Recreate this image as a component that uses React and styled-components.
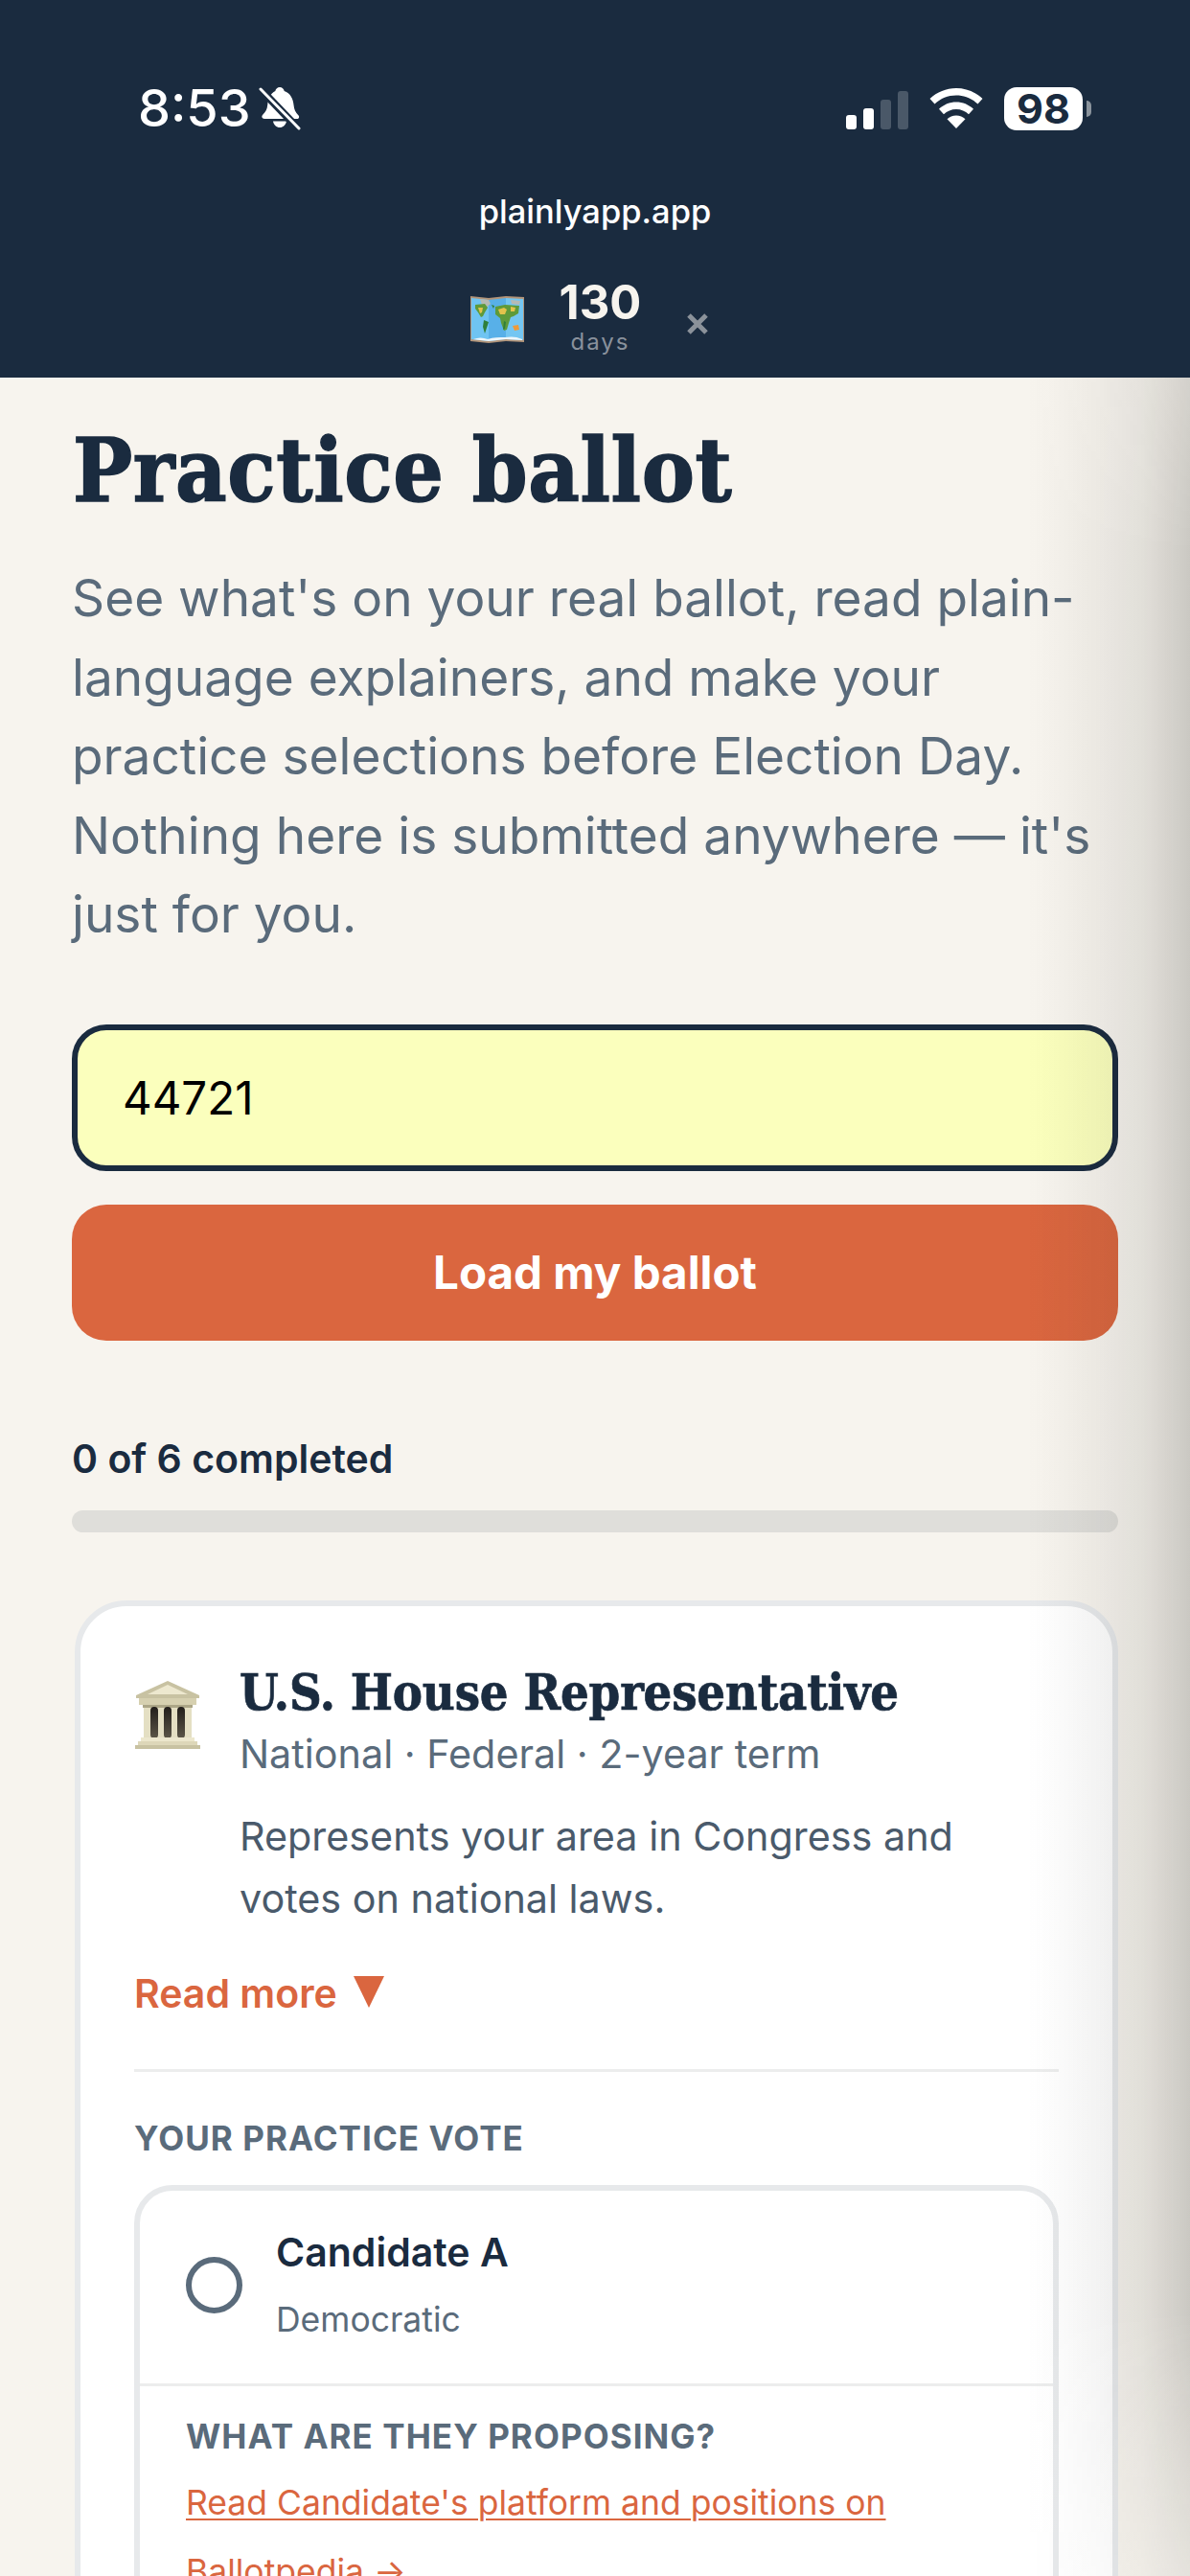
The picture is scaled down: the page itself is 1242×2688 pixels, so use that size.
import React from 'react';
import styled, { createGlobalStyle } from 'styled-components';

const GlobalStyle = createGlobalStyle`
  html, body {
    margin: 0;
    padding: 0;
    background: #f7f4ee;
  }
  body {
    width: 1242px;
    height: 2688px;
    overflow: hidden;
    font-family: Inter, "Liberation Sans", sans-serif;
  }
`;

const navy = '#1a2b3f';
const slate = '#5a6b7b';
const rust = '#da663f';

const Screen = styled.div`
  position: relative;
  width: 1242px;
  height: 2688px;
  overflow: hidden;
  background: #f7f4ee;
`;

const TopBar = styled.header`
  height: 394px;
  box-sizing: border-box;
  background: ${navy};
  padding-top: 88px;
`;

const StatusRow = styled.div`
  display: flex;
  justify-content: space-between;
  align-items: center;
  height: 50px;
  padding: 0 112px 0 144px;
`;

const StatusGroup = styled.div`
  display: flex;
  align-items: center;
  gap: ${p => p.$gap}px;
`;

const Clock = styled.span`
  font-size: 54px;
  font-weight: 500;
  line-height: 50px;
  color: #fff;
`;

const SignalBars = styled.div`
  display: flex;
  align-items: flex-end;
  gap: 7px;
  height: 40px;
  margin-top: 4px;
`;

const SignalBar = styled.i`
  display: block;
  width: 11px;
  height: ${p => p.$h}px;
  border-radius: 3px;
  background: ${p => (p.$on ? '#fff' : '#4a5868')};
`;

const Battery = styled.div`
  position: relative;
  width: 82px;
  height: 45px;
  border-radius: 13px;
  background: #fff;
  color: ${navy};
  font-size: 43px;
  font-weight: 700;
  line-height: 45px;
  text-align: center;
  &::after {
    content: '';
    position: absolute;
    left: 86px;
    top: 14px;
    width: 5px;
    height: 17px;
    border-radius: 0 5px 5px 0;
    background: #8a939c;
  }
`;

const SiteName = styled.div`
  margin-top: 61px;
  text-align: center;
  font-size: 34.5px;
  font-weight: 500;
  line-height: 44px;
  color: #fff;
`;

const Countdown = styled.div`
  display: flex;
  justify-content: center;
  align-items: center;
  height: 81px;
  margin-top: 46px;
  padding-right: 12px;
`;

const MapSlot = styled.div`
  margin-top: 7px;
  line-height: 0;
`;

const DaysBlock = styled.div`
  display: flex;
  flex-direction: column;
  align-items: center;
  margin: 2px 48px 0 37px;
`;

const DaysNumber = styled.span`
  font-size: 49px;
  font-weight: 700;
  line-height: 50px;
  color: #f7f4ee;
`;

const DaysLabel = styled.span`
  margin-top: 3px;
  font-size: 24px;
  line-height: 26px;
  letter-spacing: 2px;
  color: #89919c;
`;

const Dismiss = styled.svg`
  display: block;
  width: 22px;
  height: 22px;
  margin-top: 17px;
`;

const Content = styled.main`
  padding: 47px 75px 0;
`;

const Title = styled.h1`
  margin: 0;
  padding-left: 1px;
  font-family: "DejaVu Serif Condensed", "Liberation Serif", serif;
  font-stretch: condensed;
  font-size: 92px;
  font-weight: 700;
  line-height: 100px;
  letter-spacing: 0.6px;
  color: ${navy};
  -webkit-text-stroke: 1.5px ${navy};
`;

const Lead = styled.p`
  margin: 42px 0 0;
  font-size: 53.2px;
  line-height: 82.5px;
  color: ${slate};
`;

const ZipInput = styled.div`
  box-sizing: border-box;
  height: 153px;
  margin-top: 73px;
  padding-left: 47px;
  border: 6px solid ${navy};
  border-radius: 36px;
  background: #fbffbd;
  font-size: 47.5px;
  line-height: 141px;
  color: #000;
`;

const LoadButton = styled.button`
  display: block;
  width: 100%;
  height: 142px;
  margin-top: 35px;
  padding: 0;
  border: 0;
  border-radius: 36px;
  background: ${rust};
  font-family: inherit;
  font-size: 47.5px;
  font-weight: 700;
  color: #fff;
`;

const ProgressLabel = styled.div`
  margin-top: 93px;
  font-size: 41px;
  font-weight: 600;
  line-height: 60px;
  color: ${navy};
`;

const ProgressTrack = styled.div`
  height: 23px;
  margin-top: 24px;
  border-radius: 12px;
  background: #dfdeda;
`;

const Card = styled.section`
  box-sizing: border-box;
  margin: 71px 0 0 3px;
  height: 1100px;
  padding: 60px 56px 0;
  border: 6px solid #e7e9eb;
  border-radius: 54px;
  background: #fff;
`;

const CardHead = styled.div`
  display: flex;
  align-items: flex-start;
  gap: 38px;
`;

const TempleSlot = styled.div`
  flex: none;
  margin-top: 18px;
  line-height: 0;
`;

const CardTitle = styled.h2`
  margin: 0;
  font-family: "DejaVu Serif Condensed", "Liberation Serif", serif;
  font-stretch: condensed;
  font-size: 52px;
  font-weight: 700;
  line-height: 60px;
  letter-spacing: -0.2px;
  white-space: nowrap;
  color: ${navy};
  -webkit-text-stroke: 0.7px ${navy};
`;

const CardMeta = styled.div`
  margin-top: 6px;
  font-size: 41.3px;
  line-height: 56px;
  color: ${slate};
`;

const CardDesc = styled.p`
  margin: 26px 0 0;
  font-size: 41.3px;
  line-height: 65px;
  color: #4a5a6b;
`;

const ReadMore = styled.div`
  display: flex;
  align-items: center;
  gap: 17px;
  margin-top: 33px;
  font-size: 41px;
  font-weight: 600;
  line-height: 66px;
  color: ${rust};
`;

const Caret = styled.i`
  display: block;
  width: 0;
  height: 0;
  margin-top: -3px;
  border-left: 16px solid transparent;
  border-right: 16px solid transparent;
  border-top: 33px solid ${rust};
`;

const Rule = styled.hr`
  height: 3px;
  margin: 46px 0 0;
  border: 0;
  background: #eceded;
`;

const SectionLabel = styled.div`
  margin-top: ${p => p.$top}px;
  font-size: 35px;
  font-weight: 700;
  line-height: 44px;
  letter-spacing: 1.05px;
  color: ${slate};
`;

const CandidateBox = styled.div`
  height: 600px;
  margin-top: 27px;
  border: 6px solid #e7e9eb;
  border-radius: 40px;
  overflow: hidden;
`;

const CandidateRow = styled.div`
  display: flex;
  align-items: center;
  gap: 35px;
  height: 204px;
  box-sizing: border-box;
  padding: 0 48px 3px;
  border-bottom: 3px solid #eceded;
`;

const Radio = styled.span`
  display: block;
  box-sizing: border-box;
  width: 59px;
  height: 59px;
  border: 6px solid ${slate};
  border-radius: 50%;
`;

const CandidateName = styled.div`
  font-size: 41px;
  font-weight: 600;
  line-height: 52px;
  color: ${navy};
`;

const CandidateParty = styled.div`
  margin-top: 21px;
  font-size: 35.5px;
  line-height: 48px;
  color: ${slate};
`;

const ProposalBlock = styled.div`
  padding: 30px 48px 0;
`;

const ProposalLink = styled.a`
  display: block;
  margin-top: 12px;
  font-size: 35.5px;
  line-height: 72px;
  color: ${rust};
  text-decoration: underline;
  text-underline-offset: 4px;
  text-decoration-thickness: 2px;
`;

const EdgeShade = styled.div`
  position: absolute;
  top: 394px;
  right: 0;
  bottom: 0;
  width: 170px;
  pointer-events: none;
  background: linear-gradient(
    to right,
    rgba(40, 40, 36, 0) 0,
    rgba(40, 40, 36, 0.01) 12%,
    rgba(40, 40, 36, 0.05) 41%,
    rgba(40, 40, 36, 0.1) 71%,
    rgba(40, 40, 36, 0.21) 100%
  );
  mask-image: linear-gradient(to bottom, rgba(0, 0, 0, 0.8) 0, #000 8%, #000 88%, rgba(0, 0, 0, 0.4) 100%);
`;

const BellOff = () => (
  <svg width="44" height="46" viewBox="0 0 44 46">
    <path
      fill="#fff"
      d="M22 1c2.4 0 4.3 1.7 4.7 4C33 7 36 13 36.6 20c.3 4 1.6 7 5 10.4 1 1.2.6 3.6-1.6 3.6H6c-2.6 0-3.4-2.6-1.8-4.2 3-3 4.6-5.6 5-10C9.8 13 12.6 7 17.3 5 17.7 2.7 19.6 1 22 1zM15 36.5h14c-.8 4-3.6 6.5-7 6.5s-6.2-2.5-7-6.5z"
    />
    <path stroke={navy} strokeWidth="8" d="M-2 -1 L44 47" />
    <path stroke="#fff" strokeWidth="3" strokeLinecap="round" d="M2 3 L42 44" />
  </svg>
);

const Wifi = () => (
  <svg width="56" height="42" viewBox="0 0 56 42">
    <path
      fill="#fff"
      d="M28 0c10.5 0 20 4 27.5 11l-5 5.5C44.4 10.7 36.5 7.5 28 7.5S11.6 10.7 5.5 16.5L.5 11C8 4 17.5 0 28 0z"
    />
    <path
      fill="#fff"
      d="M28 14.5c6.8 0 13 2.6 18 7.2l-5 5.5c-3.5-3.2-8-5.2-13-5.2s-9.5 2-13 5.2l-5-5.5c5-4.6 11.2-7.2 18-7.2z"
    />
    <path fill="#fff" d="M28 28.5c3.7 0 7 1.4 9.5 3.7L28 42 18.5 32.2c2.5-2.3 5.8-3.7 9.5-3.7z" />
  </svg>
);

const MapEmoji = () => (
  <svg width="56" height="50" viewBox="0 0 56 50">
    <path fill="#b2957a" d="M0 1l19 2 18-2 19 1v47l-19-1-18 2-19-2z" />
    <path fill="#6fc4f2" d="M1 3l18 2v43L1 46z" />
    <path fill="#58b0e8" d="M19 5l18-2v43l-18 2z" />
    <path fill="#74c6f2" d="M37 3l18 1v43l-18-1z" />
    <path fill="#eef6fa" d="M3 46c5-2 10-2 15 0 6-2 12-2 18-2 6-1 12-1 18 2v1l-17-1-18 2-17-2z" />
    <path fill="#b5bab4" d="M10 4l9 1 2 4-5 4-4-3zM42 5l10 1-1 4-8-1z" />
    <path fill="#5e9a3a" d="M5 10l10-1 3 4-3 5-2 4-2 1-3-5-3-4zM26 12l10-2 15 1-1 8-5 3-3 1-2 6-2 7-3 1-3-8-1-5-5-4z" />
    <path fill="#e3c34c" d="M8 13l5 0-1 5-2 1zM29 15l6-2 3 2-2 5-5 0zM42 12l5 1-1 4-4 0z" />
    <path fill="#2f7f3a" d="M14 26l5 2-2 6-2 6-2-7zM35 27l2 1-1 7-2 1zM22 10l3 1-1 3z" />
    <path fill="#ee9a3a" d="M44 32l6-1 1 5-5 1z" />
  </svg>
);

const Temple = () => (
  <svg width="72" height="72" viewBox="0 0 72 72">
    <defs>
      <linearGradient id="gap" x1="0" y1="0" x2="0" y2="1">
        <stop offset="0" stopColor="#221e1b" />
        <stop offset="1" stopColor="#5c5648" />
      </linearGradient>
    </defs>
    <path fill="#c8c2a2" d="M35 0 L68 15 V18 H2 V15 Z" />
    <path fill="#ede8cf" d="M35 4 L56 14 H14 Z" />
    <rect x="5" y="18" width="60" height="7" fill="#d6d0b0" />
    <rect x="9" y="25" width="52" height="3" fill="#aca687" />
    <rect x="10" y="28" width="50" height="31" fill="#e4dfc3" />
    <rect x="17" y="27" width="8" height="33" rx="4" fill="url(#gap)" />
    <rect x="31" y="27" width="8" height="33" rx="4" fill="url(#gap)" />
    <rect x="45" y="27" width="8" height="33" rx="4" fill="url(#gap)" />
    <rect x="7" y="59" width="56" height="4" fill="#ece7cd" />
    <rect x="4" y="63" width="62" height="4" fill="#ddd7b9" />
    <rect x="1" y="67" width="68" height="4" fill="#c8c2a2" />
  </svg>
);

export default function App() {
  return (
    <Screen>
      <GlobalStyle />
      <TopBar>
        <StatusRow>
          <StatusGroup $gap={8}>
            <Clock>8:53</Clock>
            <BellOff />
          </StatusGroup>
          <StatusGroup $gap={22}>
            <SignalBars>
              <SignalBar $h={15} $on />
              <SignalBar $h={22} $on />
              <SignalBar $h={31} />
              <SignalBar $h={40} />
            </SignalBars>
            <Wifi />
            <Battery>98</Battery>
          </StatusGroup>
        </StatusRow>
        <SiteName>plainlyapp.app</SiteName>
        <Countdown>
          <MapSlot>
            <MapEmoji />
          </MapSlot>
          <DaysBlock>
            <DaysNumber>130</DaysNumber>
            <DaysLabel>days</DaysLabel>
          </DaysBlock>
          <Dismiss viewBox="0 0 22 22">
            <path stroke="#8b929a" strokeWidth="5" d="M2 2 L20 20 M20 2 L2 20" />
          </Dismiss>
        </Countdown>
      </TopBar>
      <Content>
        <Title>Practice ballot</Title>
        <Lead>
          See what's on your real ballot, read plain-language explainers, and make your practice selections before
          Election Day. Nothing here is submitted anywhere — it's just for you.
        </Lead>
        <ZipInput>44721</ZipInput>
        <LoadButton>Load my ballot</LoadButton>
        <ProgressLabel>0 of 6 completed</ProgressLabel>
        <ProgressTrack />
        <Card>
          <CardHead>
            <TempleSlot>
              <Temple />
            </TempleSlot>
            <div>
              <CardTitle>U.S. House Representative</CardTitle>
              <CardMeta>National · Federal · 2-year term</CardMeta>
              <CardDesc>Represents your area in Congress and votes on national laws.</CardDesc>
            </div>
          </CardHead>
          <ReadMore>
            Read more
            <Caret />
          </ReadMore>
          <Rule />
          <SectionLabel $top={47}>YOUR PRACTICE VOTE</SectionLabel>
          <CandidateBox>
            <CandidateRow>
              <Radio />
              <div>
                <CandidateName>Candidate A</CandidateName>
                <CandidateParty>Democratic</CandidateParty>
              </div>
            </CandidateRow>
            <ProposalBlock>
              <SectionLabel $top={0}>WHAT ARE THEY PROPOSING?</SectionLabel>
              <ProposalLink>Read Candidate's platform and positions on Ballotpedia →</ProposalLink>
            </ProposalBlock>
          </CandidateBox>
        </Card>
      </Content>
      <EdgeShade />
    </Screen>
  );
}
